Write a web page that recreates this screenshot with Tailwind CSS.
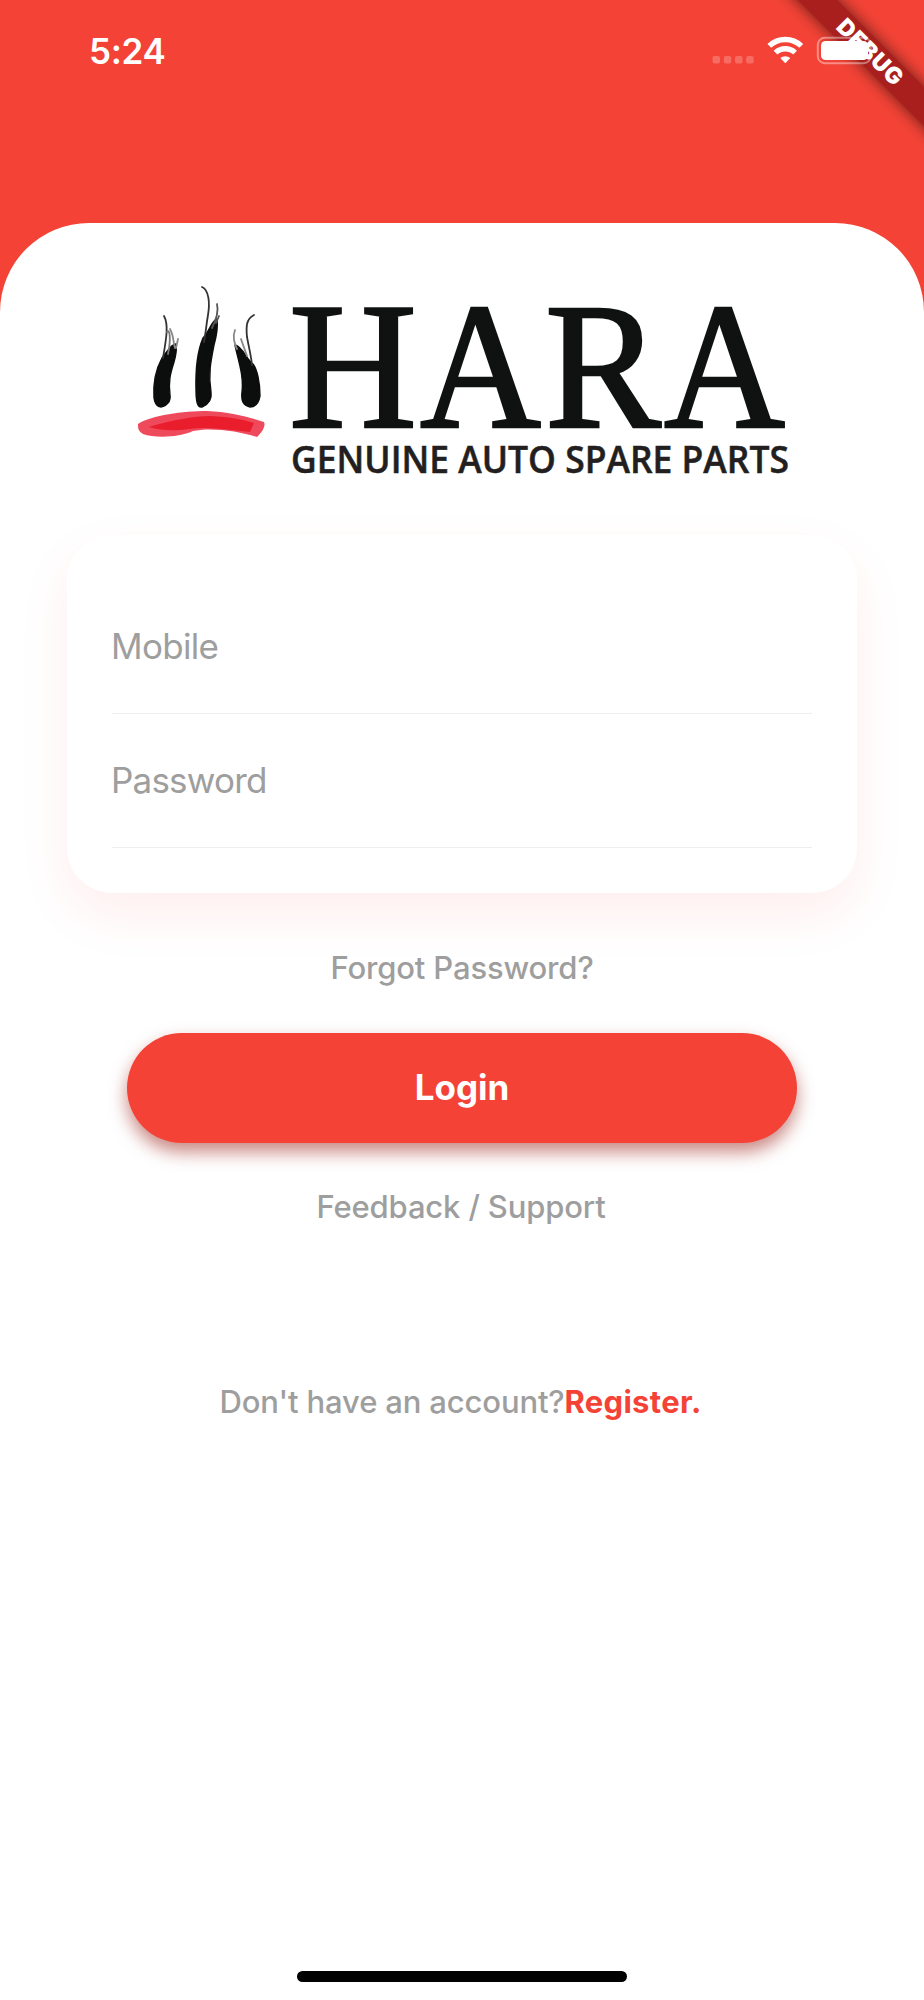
<!DOCTYPE html>
<html lang="en">
  <head>
    <meta charset="UTF-8" />
    <meta name="viewport" content="width=device-width, initial-scale=1.0" />
    <title>Hara - Login</title>
    <script src="https://cdn.jsdelivr.net/npm/@tailwindcss/browser@4"></script>
  </head>
  <body class="bg-[#f44336] font-['Inter',sans-serif]">
    <div class="relative flex h-[2000px] w-[924px] flex-col overflow-hidden">
      <!-- Status bar -->
      <header class="flex h-[223px] shrink-0 items-start justify-between pl-[89px] pr-[48px]">
        <span class="mt-[31px] text-[35px] leading-[40px] font-semibold tracking-[-0.3px] text-white">5:24</span>
        <svg class="mt-[30px]" width="166" height="40" viewBox="710 30 166 40" fill="none">
          <g fill="#fff" fill-opacity=".22">
            <rect x="712.5" y="56" width="7.5" height="7.5" rx="2" />
            <rect x="723.8" y="56" width="7.5" height="7.5" rx="2" />
            <rect x="735" y="56" width="7.5" height="7.5" rx="2" />
            <rect x="746.2" y="56" width="7.5" height="7.5" rx="2" />
          </g>
          <g stroke="#fff" stroke-width="5.4">
            <path d="M769.3 45.9A23.2 23.2 0 0 1 801.3 45.9" />
            <path d="M775.5 52.6A14.3 14.3 0 0 1 795.1 52.6" />
          </g>
          <path d="M785.3 63.3l-5-5.2a7.4 7.4 0 0 1 10 0z" fill="#fff" />
        </svg>
      </header>

      <!-- Sheet -->
      <main class="flex grow flex-col items-center rounded-t-[89px] bg-white">
        <svg class="mt-[57px]" width="664" height="200" viewBox="130 280 664 200">
          <g fill="#0c0e0e" stroke="#0c0e0e" stroke-width="1.4" stroke-linejoin="round">
            <path d="M162 358C156 369 153 384 154 398C155 405 158 407 161 407C167 406 171 401 170 395C168 380 171 372 174 362C176 355 177 350 176 344C171 344 167 352 162 358Z" />
            <path d="M203 338C197 352 195.5 372 196 390C196 403 198 408 202 407C209 404 212 399 211 392C208 374 211 360 214 345C217 334 218 326 217 319C212 320 209 332 203 338Z" />
            <path d="M235 345C238 360 244 375 242 392C241 401 243 405 250 407C256 407 259 402 260 396C260 382 257 369 253 364C246 359 243 347 235 345Z" />
          </g>
          <g fill="none" stroke="#333" stroke-width="1.8" stroke-linecap="round">
            <path d="M164 316C169 325 166 340 163 358" />
            <path d="M170 329C174 336 173 342 175 348M178 339L176 348" stroke="#888" />
            <path d="M167 332C170 328 171 340 168 354" stroke="#777" />
            <path d="M202 287C209 290 210 303 208 315C206 326 206 332 204 342" />
            <path d="M217 304C219 312 216 320 212 328M219 316L216 323" stroke="#555" />
            <path d="M254 315C246 319 246 327 247 337C249 348 251 355 252 365" />
            <path d="M235 330C232 338 235 344 237 349M241 339C243 345 245 350 247 356" stroke="#888" />
          </g>
          <path d="M138 424C152 415 183 411 207 411C230 412 248 417 264 422C266 427 261 433 257 437C240 431 210 427 193 431C178 438 154 438 143 434C138 431 138 428 138 424Z" fill="#ee4a5c" />
          <path d="M149 427C165 422 190 416 211 416C230 417 245 420 254 423L250 432C230 430 208 426 190 429C175 431 162 431 149 427Z" fill="#e91d2c" />
          <g font-family="Liberation Serif, serif" font-size="180" fill="#0f1211" stroke="#0f1211" stroke-width="2.6">
            <text x="289" y="427" textLength="128" lengthAdjust="spacingAndGlyphs">H</text>
            <text x="420" y="427" textLength="121" lengthAdjust="spacingAndGlyphs">A</text>
            <text x="545" y="427" textLength="116" lengthAdjust="spacingAndGlyphs">R</text>
            <text x="664" y="427" textLength="121" lengthAdjust="spacingAndGlyphs">A</text>
          </g>
          <text x="291" y="472.5" textLength="498" lengthAdjust="spacingAndGlyphs" font-family="Open Sans, sans-serif" font-weight="600" font-size="37" fill="#231f20" stroke="#231f20" stroke-width=".5">GENUINE AUTO SPARE PARTS</text>
        </svg>

        <!-- Fields -->
        <form class="mt-[55px] flex w-[790px] flex-col rounded-[45px] bg-white p-[45px] shadow-[0_22px_54px_#ffeeee]">
          <input type="text" placeholder="Mobile" class="h-[134px] border-b border-[#eeeeee] pb-[2px] indent-[-1px] text-[35px] tracking-[-0.7px] outline-none placeholder:text-[#9e9e9e]" />
          <input type="password" placeholder="Password" class="h-[134px] border-b border-[#eeeeee] pb-[2px] indent-[-1px] text-[35px] tracking-[-0.8px] outline-none placeholder:text-[#9e9e9e]" />
        </form>

        <a class="mt-[56px] text-[31px] leading-[38px] font-medium tracking-[-0.15px] text-[#9e9e9e]">Forgot Password?</a>
        <button class="mt-[46px] h-[110px] w-[670px] rounded-full bg-[#f44336] pb-px text-[35px] font-bold text-white shadow-[0_9px_17px_rgba(150,20,10,0.5)]">Login</button>
        <a class="mt-[45px] pr-[2px] text-[31px] leading-[38px] font-medium tracking-[-0.15px] text-[#9e9e9e]">Feedback / Support</a>
        <p class="mt-[157px] flex pr-[3px] text-[31px] leading-[38px] font-medium text-[#9e9e9e]">
          <span class="tracking-[-0.15px]">Don't have an account?</span><a class="font-bold tracking-[0.3px] text-[#f44336]">Register.</a>
        </p>

        <div class="mt-auto mb-[18px] h-[11px] w-[330px] rounded-full bg-black"></div>
      </main>

      <!-- Debug ribbon -->
      <svg class="absolute top-0 right-0" width="204" height="180" viewBox="720 0 204 180">
        <defs>
          <filter id="soft" x="-20%" y="-20%" width="140%" height="140%"><feGaussianBlur stdDeviation="8" /></filter>
        </defs>
        <path d="M758-40L984 186V147L797-40Z" fill="#000" fill-opacity=".6" filter="url(#soft)" />
        <path d="M758-40L984 186V147L797-40Z" fill="#a91f1d" />
        <rect x="817.8" y="37.8" width="53" height="25.4" rx="7" fill="none" stroke="#fff" stroke-opacity=".4" stroke-width="2" />
        <rect x="821" y="41" width="47" height="19" rx="4.5" fill="#fff" />
        <text transform="translate(870 52) rotate(45)" y="8" text-anchor="middle" textLength="83" font-size="23" font-weight="900" fill="#fff">DEBUG</text>
      </svg>
    </div>
  </body>
</html>
